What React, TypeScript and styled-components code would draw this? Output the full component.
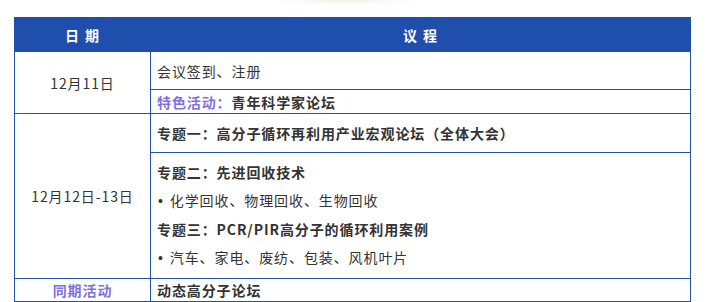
import styled, { createGlobalStyle } from "styled-components";

const GlobalStyle = createGlobalStyle`
  html, body {
    margin: 0;
    padding: 0;
    background: #fff;
  }
  body {
    font-family: "Noto Sans CJK SC", "Noto Sans", sans-serif;
    color: #333;
  }
`;

const Page = styled.div`
  width: 709px;
  padding: 0 0 0 14px;
  box-sizing: border-box;
`;

const Glow = styled.div`
  height: 17px;
  margin-left: -14px;
  background: radial-gradient(
    ellipse 80px 6px at 345px 0,
    rgba(214, 235, 206, 0.6),
    rgba(236, 245, 232, 0.35) 60%,
    rgba(255, 255, 255, 0) 100%
  );
`;

const Table = styled.table`
  width: 677px;
  border-collapse: collapse;
  table-layout: fixed;
  font-size: 14px;
  letter-spacing: 0.9px;
`;

const HeadCell = styled.th<{ $w?: number }>`
  width: ${(p) => (p.$w ? `${p.$w}px` : "auto")};
  height: 33px;
  padding: 0;
  background: #1f4ead;
  color: #fff;
  font-weight: bold;
  font-size: 14px;
  letter-spacing: 1px;
  word-spacing: 1px;
  text-align: center;
  border: 1px solid #1f4ead;
  white-space: pre;
`;

const DateCell = styled.td<{ $accent?: boolean }>`
  border: 1px solid #2150ae;
  text-align: center;
  vertical-align: middle;
  padding: 0;
  color: ${(p) => (p.$accent ? "#7f70e2" : "#333")};
  font-weight: ${(p) => (p.$accent ? "bold" : "normal")};
`;

const Cell = styled.td<{ $h: number; $bold?: boolean }>`
  height: ${(p) => p.$h}px;
  border: 1px solid #2150ae;
  padding: 0 6px;
  vertical-align: middle;
  font-weight: ${(p) => (p.$bold ? "bold" : "normal")};
  line-height: 20px;
`;

const Accent = styled.span`
  color: #7f70e2;
  font-weight: bold;
`;

const Strong = styled.span`
  font-weight: bold;
`;

const Block = styled.div`
  padding: 5px 0 6px;
`;

const Line = styled.div<{ $bold?: boolean }>`
  line-height: 28px;
  font-weight: ${(p) => (p.$bold ? "bold" : "normal")};
`;

const Bullet = styled.span`
  font-family: "Liberation Sans", Arial, sans-serif;
  margin: 0 6px 0 1px;
`;

export default function App() {
  return (
    <Page>
      <GlobalStyle />
      <Glow />
      <Table>
        <thead>
          <tr>
            <HeadCell $w={135}>日 期</HeadCell>
            <HeadCell>议 程</HeadCell>
          </tr>
        </thead>
        <tbody>
          <tr>
            <DateCell rowSpan={2}>12月11日</DateCell>
            <Cell $h={37}>会议签到、注册</Cell>
          </tr>
          <tr>
            <Cell $h={23}>
              <Accent>特色活动：</Accent>
              <Strong>青年科学家论坛</Strong>
            </Cell>
          </tr>
          <tr>
            <DateCell rowSpan={2}>12月12日-13日</DateCell>
            <Cell $h={38} $bold>
              专题一：高分子循环再利用产业宏观论坛（全体大会）
            </Cell>
          </tr>
          <tr>
            <Cell $h={122}>
              <Block>
                <Line $bold>专题二：先进回收技术</Line>
                <Line>
                  <Bullet>•</Bullet>化学回收、物理回收、生物回收
                </Line>
                <Line $bold>专题三：PCR/PIR高分子的循环利用案例</Line>
                <Line>
                  <Bullet>•</Bullet>汽车、家电、废纺、包装、风机叶片
                </Line>
              </Block>
            </Cell>
          </tr>
          <tr>
            <DateCell $accent>同期活动</DateCell>
            <Cell $h={22} $bold>
              动态高分子论坛
            </Cell>
          </tr>
        </tbody>
      </Table>
    </Page>
  );
}
